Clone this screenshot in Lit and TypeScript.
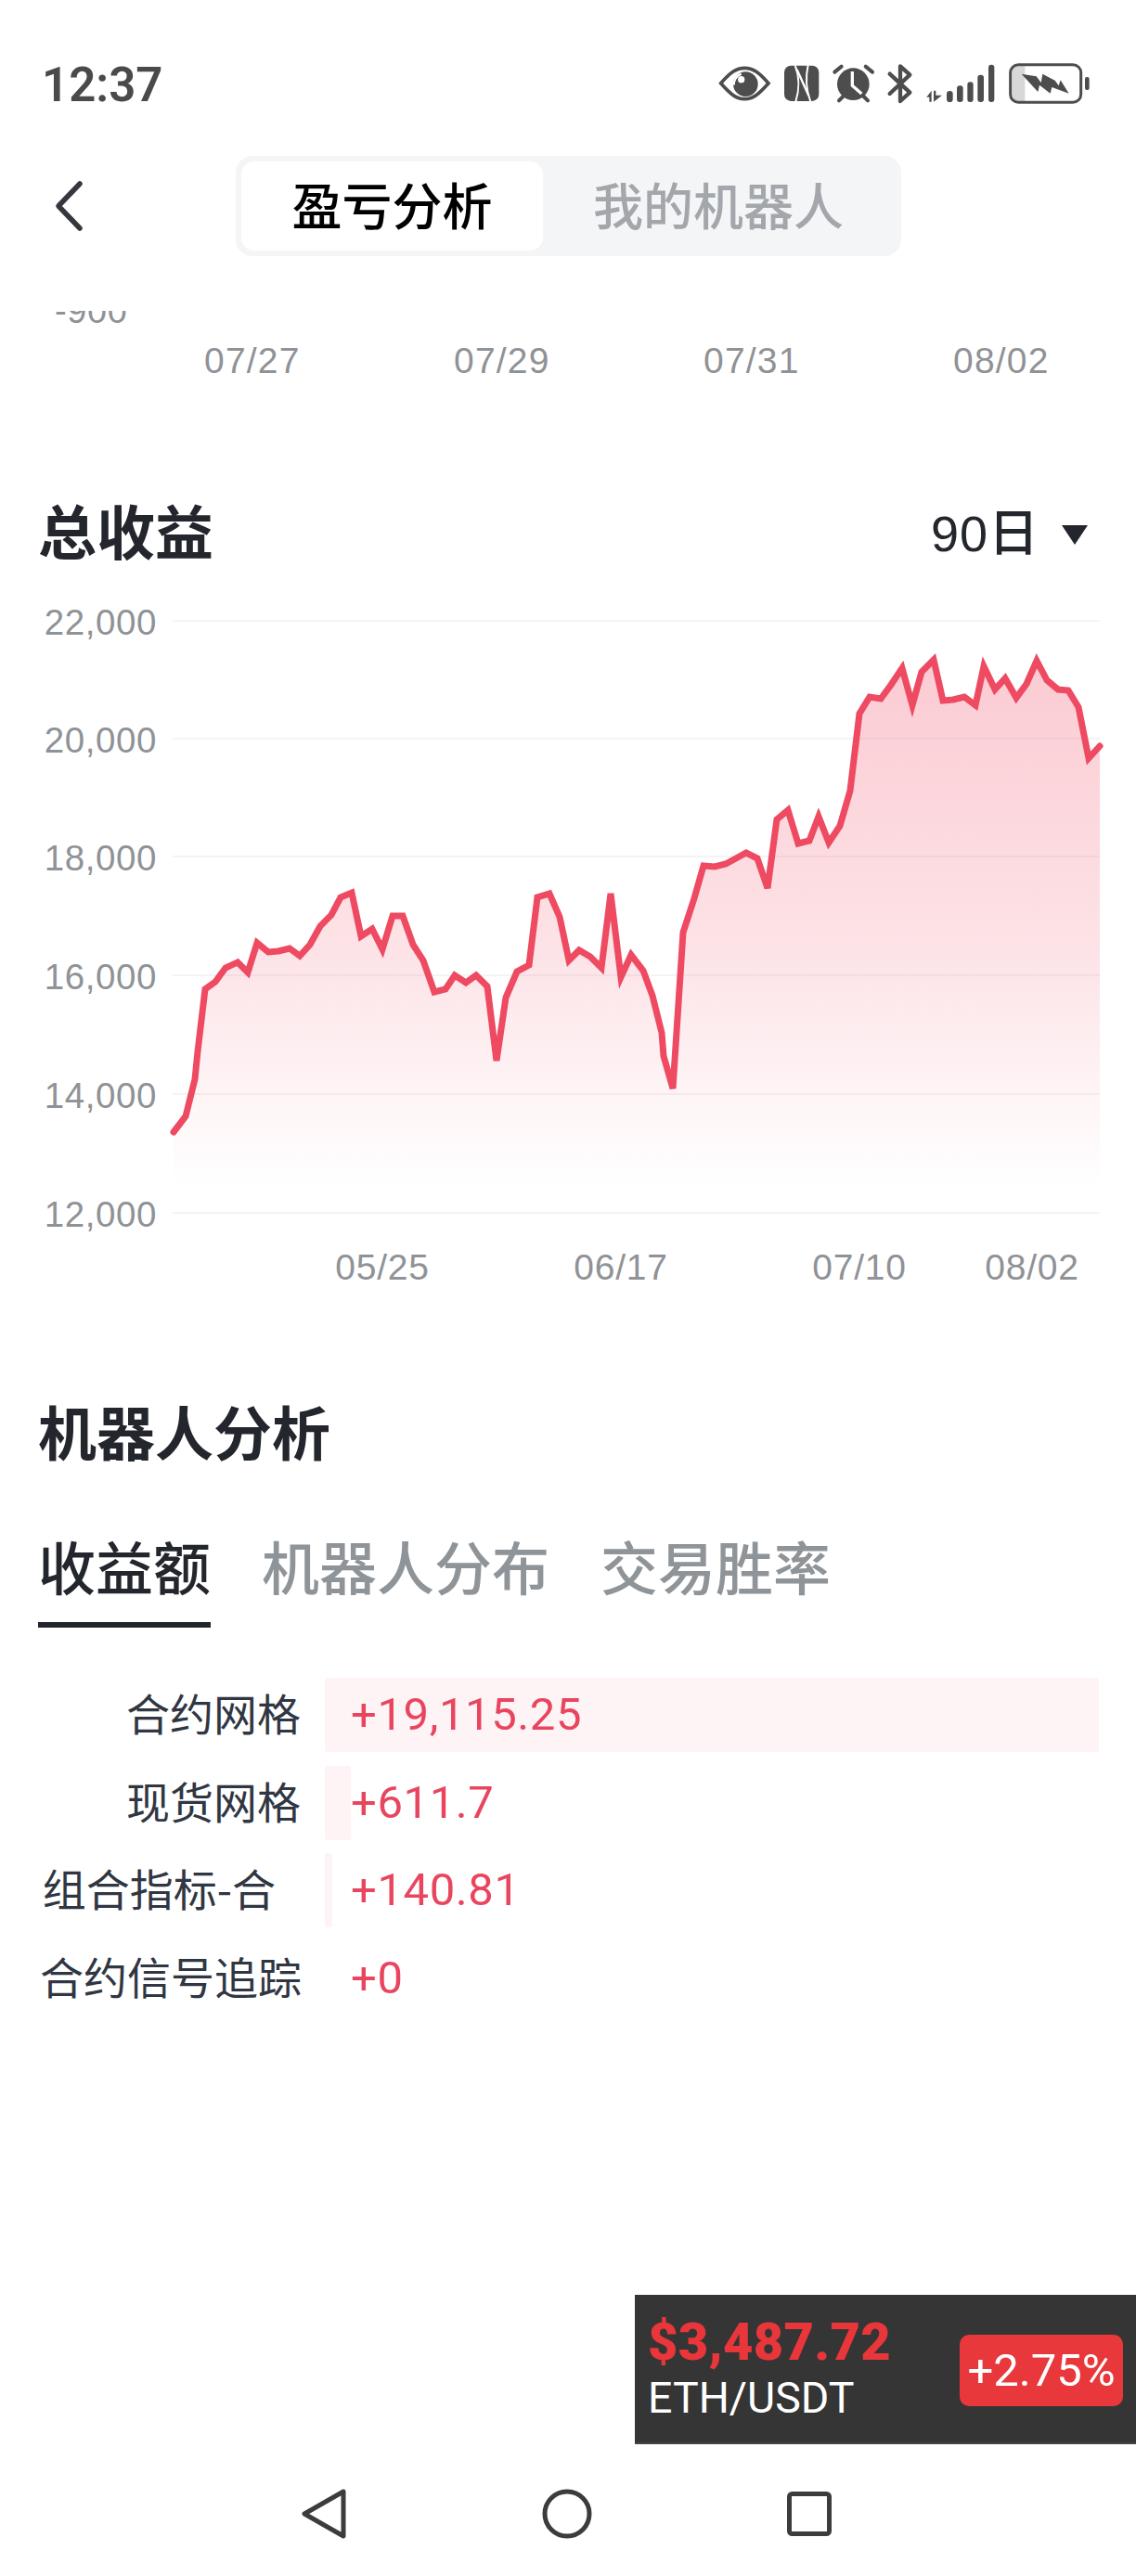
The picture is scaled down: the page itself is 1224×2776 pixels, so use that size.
import { LitElement, html, css, svg } from "lit";
import { customElement } from "lit/decorators.js";

const LINE: [number, number][] = [
  [187,1220],[200,1203],[210,1163],[213,1133],[221,1066],[232,1058],[243,1043],[256,1037],[267,1048],[277,1016],
  [289,1026],[300,1025],[312,1022],[323,1030],[334,1018],[345,998],[357,986],[367,967],[379,962],[389,1009],
  [401,1001],[412,1023],[423,987],[434,987],[445,1018],[456,1035],[468,1069],[480,1066],[490,1051],[502,1059],
  [513,1051],[525,1063],[535,1143],[545,1075],[557,1047],[570,1040],[579,967],[592,963],[603,988],[613,1035],
  [624,1024],[636,1031],[648,1043],[658,963],[669,1053],[680,1029],[693,1046],[703,1073],[713,1113],[715,1138],
  [725,1173],[736,1005],[748,968],[758,933],[770,934],[782,931],[793,925],[804,919],[816,925],[827,957],
  [837,883],[849,873],[860,909],[872,906],[882,880],[893,908],[905,890],[916,852],[926,769],[937,751],
  [949,753],[960,738],[972,720],[983,760],[993,724],[1006,711],[1016,755],[1027,754],[1039,751],[1051,760],
  [1060,718],[1072,743],[1083,731],[1095,752],[1106,737],[1117,712],[1128,733],[1140,743],[1151,744],[1162,762],
  [1173,817],[1185,804],
];

const Y_AXIS = [
  { label: "22,000", y: 669 },
  { label: "20,000", y: 796 },
  { label: "18,000", y: 923 },
  { label: "16,000", y: 1051 },
  { label: "14,000", y: 1179 },
  { label: "12,000", y: 1307 },
];
const X_AXIS = [
  { label: "05/25", x: 412 },
  { label: "06/17", x: 669 },
  { label: "07/10", x: 926 },
  { label: "08/02", x: 1112 },
];
const ROWS = [
  { name: "合约网格", value: "+19,115.25", pct: 100, short: false },
  { name: "现货网格", value: "+611.7", pct: 3.4, short: false },
  { name: "组合指标-合", value: "+140.81", pct: 0.9, short: true },
  { name: "合约信号追踪", value: "+0", pct: 0, short: false },
];

@customElement("app-root")
export class AppRoot extends LitElement {
  static styles = css`
    :host {
      display: flex;
      flex-direction: column;
      position: relative;
      width: 1224px;
      height: 2776px;
      background: #fff;
      overflow: hidden;
      font-family: "Liberation Sans", "Noto Sans CJK SC", sans-serif;
      color: #23262d;
    }
    .status {
      height: 140px;
      display: flex;
      justify-content: space-between;
      align-items: center;
      padding: 44px 34px 0 45px;
      box-sizing: border-box;
    }
    .time {
      font: 600 51px/60px Roboto, sans-serif;
      color: #4a4a4a;
      margin-top: -1px;
    }
    .status-icons {
      display: block;
      width: 440px;
      height: 80px;
      margin-top: -7px;
    }
    .nav {
      height: 195px;
      box-sizing: border-box;
      padding: 28px 0 0 254px;
      position: relative;
    }
    .back {
      position: absolute;
      left: 56px;
      top: 54px;
      width: 36px;
      height: 56px;
    }
    .seg {
      width: 717px;
      height: 108px;
      box-sizing: border-box;
      padding: 6px;
      background: #f3f5f7;
      border-radius: 18px;
      display: flex;
    }
    .seg div {
      display: flex;
      align-items: center;
      justify-content: center;
      font-size: 54px;
      font-family: "Noto Sans CJK SC", sans-serif;
      padding-bottom: 5px;
      box-sizing: border-box;
    }
    .seg .on {
      width: 325px;
      background: #fff;
      border-radius: 14px;
      color: #000;
      font-weight: 500;
    }
    .seg .off {
      flex: 1;
      color: #a3a7ab;
      font-weight: 500;
      padding-right: 2px;
    }
    .clip {
      height: 14px;
      overflow: hidden;
      padding-left: 59px;
    }
    .clip span {
      display: block;
      margin-top: -20px;
      font-size: 38px;
      line-height: 40px;
      letter-spacing: 0.6px;
      color: #8f9296;
    }
    .top-x {
      margin-top: 15px;
      height: 50px;
      padding-left: 220px;
      display: grid;
      grid-template-columns: repeat(4, 269px);
      font-size: 39px;
      line-height: 50px;
      letter-spacing: 1.2px;
      color: #8f9296;
    }
    .head {
      margin-top: 126px;
      height: 70px;
      padding: 0 52px 0 41px;
      display: flex;
      justify-content: space-between;
      align-items: center;
    }
    .h {
      font: 700 63px/70px "Noto Sans CJK SC", sans-serif;
      color: #23262d;
    }
    .head .h {
      padding-bottom: 10px;
    }
    .period {
      display: flex;
      align-items: center;
      gap: 24px;
      font: 500 54px/70px "Noto Sans CJK SC", sans-serif;
      color: #23262d;
    }
    .period .num {
      font-family: "Liberation Sans", "Noto Sans CJK SC", sans-serif;
      letter-spacing: 1px;
    }
    .tri {
      width: 28px;
      height: 21px;
      display: block;
      margin-top: 3px;
    }
    .chart {
      display: block;
      width: 1224px;
      height: 760px;
      margin-top: 40px;
    }
    .axis {
      font-family: "Liberation Sans", sans-serif;
      font-size: 38.5px;
      letter-spacing: 0.6px;
      fill: #8f9296;
    }
    .axis.x {
      font-size: 39px;
      letter-spacing: 0.8px;
    }
    .robots {
      margin-top: 100px;
      padding-left: 41px;
      height: 68px;
    }
    .robots .h {
      line-height: 62px;
    }
    .tabs {
      margin-top: 70px;
      padding-left: 41px;
      display: flex;
      gap: 55px;
    }
    .tab {
      padding: 0 0 22px;
      font: 500 62px/78px "Noto Sans CJK SC", sans-serif;
      color: #8f9499;
      border-bottom: 6px solid transparent;
    }
    .tab.on {
      color: #23262d;
      border-bottom-color: #23262d;
    }
    .rows {
      margin-top: 54px;
      padding: 0 40px 0 43px;
      display: flex;
      flex-direction: column;
      gap: 14.6px;
    }
    .row {
      display: grid;
      grid-template-columns: 281px 1fr;
      column-gap: 26px;
      height: 80px;
      align-items: start;
    }
    .name {
      text-align: right;
      white-space: nowrap;
      font: 400 47px/74px "Noto Sans CJK SC", sans-serif;
      color: #303642;
    }
    .name.short {
      padding-right: 27px;
    }
    .cell {
      position: relative;
      height: 80px;
    }
    .bar {
      position: absolute;
      left: 0;
      top: 0;
      bottom: 0;
      background: #fef4f5;
      border-radius: 2px;
    }
    .val {
      position: relative;
      padding-left: 28px;
      font: 400 49px/80px Roboto, sans-serif;
      letter-spacing: 0.6px;
      color: #e8465f;
    }
    .ticker {
      position: absolute;
      right: 0;
      bottom: 142px;
      width: 540px;
      height: 161px;
      box-sizing: border-box;
      background: #353535;
      border-bottom: 2px solid #444;
      padding: 0 14px 0 14px;
      display: flex;
      align-items: center;
      justify-content: space-between;
    }
    .price {
      font: 900 56px/62px Roboto, sans-serif;
      color: #e8363a;
      letter-spacing: 0.3px;
    }
    .pair {
      font: 400 46.5px/58px Roboto, sans-serif;
      color: #fff;
    }
    .badge {
      width: 176px;
      height: 77px;
      margin-top: 3px;
      background: #e8383c;
      border-radius: 10px;
      display: flex;
      align-items: center;
      justify-content: center;
      font: 400 49px/77px Roboto, sans-serif;
      color: #fff;
    }
    .foot {
      margin-top: auto;
      height: 136px;
      box-sizing: border-box;
      display: flex;
      justify-content: center;
      align-items: center;
      gap: 201px;
      padding: 2px 2px 0 0;
    }
    .foot svg {
      width: 60px;
      height: 60px;
      display: block;
    }
  `;

  private statusIcons() {
    const d = "#4d4d4d";
    return html`<svg class="status-icons" viewBox="0 0 1320 240">
      <path d="M80 122C112 86 130 73 157 73C184 73 202 86 234 122C202 158 184 173 157 173C130 173 112 158 80 122Z" fill="none" stroke=${d} stroke-width="11"/>
      <circle cx="160" cy="125" r="40" fill=${d}/>
      <path d="M122 128A36 36 0 0 1 146 92" fill="none" stroke="#fff" stroke-width="7"/>
      <circle cx="146" cy="110" r="11" fill="#fff"/>
      <rect x="285" y="65" width="112" height="115" rx="22" fill=${d}/>
      <path d="M320 64C334 100 334 145 322 182" fill="none" stroke="#fff" stroke-width="6"/>
      <path d="M362 64C354 100 354 140 370 182" fill="none" stroke="#fff" stroke-width="6"/>
      <path d="M326 78L364 162" fill="none" stroke="#fff" stroke-width="7"/>
      <circle cx="508" cy="125" r="52" fill=${d}/>
      <path d="M448 86L470 68M548 68L570 86M462 178L475 165M555 178L542 165" stroke=${d} stroke-width="12" stroke-linecap="round"/>
      <path d="M505 84V130L535 156" fill="none" stroke="#fff" stroke-width="10"/>
      <path d="M626 92L691 152L660 180V67L691 95L626 156" fill="none" stroke=${d} stroke-width="13" stroke-linecap="round" stroke-linejoin="round"/>
      <path d="M745 167L761 146V182H754V167ZM768 146H775V161H795L768 182Z" fill=${d}/>
      <rect x="810" y="147" width="20" height="36" rx="10" fill=${d}/>
      <rect x="843" y="130" width="20" height="53" rx="9" fill=${d}/>
      <rect x="877" y="118" width="19" height="65" rx="9" fill=${d}/>
      <rect x="910" y="95" width="20" height="88" rx="9" fill=${d}/>
      <rect x="945" y="62" width="19" height="121" rx="9" fill=${d}/>
      <rect x="1021" y="66" width="42" height="114" fill="#d8d8d8"/>
      <rect x="1016" y="62" width="228" height="122" rx="26" fill="none" stroke=${d} stroke-width="9"/>
      <path d="M1052 92L1100 100L1115 120L1120 92L1160 113L1172 130L1178 112L1205 155L1150 135L1145 155L1110 128L1105 150Z" fill=${d}/>
      <rect x="1257" y="102" width="14" height="42" rx="6" fill=${d}/>
    </svg>`;
  }

  private chart() {
    const pts = LINE.map((p) => p.join(",")).join(" ");
    const area = `${pts} 1185,1278 187,1278`;
    return html`<svg class="chart" viewBox="0 650 1224 760">
      <defs>
        <linearGradient id="fade" x1="0" y1="712" x2="0" y2="1278" gradientUnits="userSpaceOnUse">
          <stop offset="0" stop-color="#f0465f" stop-opacity="0.28"/>
          <stop offset="0.56" stop-color="#f0465f" stop-opacity="0.15"/>
          <stop offset="0.7" stop-color="#f0465f" stop-opacity="0.1"/>
          <stop offset="0.85" stop-color="#f0465f" stop-opacity="0.05"/>
          <stop offset="1" stop-color="#f0465f" stop-opacity="0"/>
        </linearGradient>
      </defs>
      ${Y_AXIS.map(
        (t) => svg`
          <line x1="186" x2="1185" y1=${t.y} y2=${t.y} stroke="#f3f4f5" stroke-width="2"/>
          <text class="axis" x="169" y=${t.y + 15} text-anchor="end">${t.label}</text>`
      )}
      ${X_AXIS.map(
        (t) => svg`<text class="axis x" x=${t.x} y="1379" text-anchor="middle">${t.label}</text>`
      )}
      <polygon points=${area} fill="url(#fade)"/>
      <polyline points=${pts} fill="none" stroke="#ee4a62" stroke-width="7" stroke-linejoin="miter" stroke-linecap="round"/>
    </svg>`;
  }

  render() {
    return html`
      <div class="status">
        <div class="time">12:37</div>
        ${this.statusIcons()}
      </div>
      <div class="nav">
        <svg class="back" viewBox="0 0 36 56">
          <path d="M30 4L7 28L30 52" fill="none" stroke="#34373d" stroke-width="5.5" stroke-linecap="round" stroke-linejoin="round"/>
        </svg>
        <div class="seg">
          <div class="on">盈亏分析</div>
          <div class="off">我的机器人</div>
        </div>
      </div>
      <div class="clip"><span>-900</span></div>
      <div class="top-x">
        <span>07/27</span><span>07/29</span><span>07/31</span><span>08/02</span>
      </div>
      <div class="head">
        <div class="h">总收益</div>
        <div class="period">
          <span class="num">90日</span>
          <svg class="tri" viewBox="0 0 28 21"><path d="M0 0H28L14 21Z" fill="#23262d"/></svg>
        </div>
      </div>
      ${this.chart()}
      <div class="robots"><div class="h">机器人分析</div></div>
      <div class="tabs">
        <div class="tab on">收益额</div>
        <div class="tab">机器人分布</div>
        <div class="tab">交易胜率</div>
      </div>
      <div class="rows">
        ${ROWS.map(
          (r) => html`<div class="row">
            <div class="name ${r.short ? "short" : ""}">${r.name}</div>
            <div class="cell">
              <div class="bar" style="width:${r.pct}%"></div>
              <div class="val">${r.value}</div>
            </div>
          </div>`
        )}
      </div>
      <div class="ticker">
        <div>
          <div class="price">$3,487.72</div>
          <div class="pair">ETH/USDT</div>
        </div>
        <div class="badge">+2.75%</div>
      </div>
      <div class="foot">
        <svg viewBox="0 0 60 60"><path d="M50 6L8 30L50 54Z" fill="none" stroke="#3c3c3c" stroke-width="5" stroke-linejoin="round"/></svg>
        <svg viewBox="0 0 60 60"><circle cx="30" cy="30" r="24" fill="none" stroke="#3c3c3c" stroke-width="5"/></svg>
        <svg viewBox="0 0 60 60"><rect x="8.5" y="8.5" width="43" height="43" rx="3" fill="none" stroke="#3c3c3c" stroke-width="5"/></svg>
      </div>
    `;
  }
}
